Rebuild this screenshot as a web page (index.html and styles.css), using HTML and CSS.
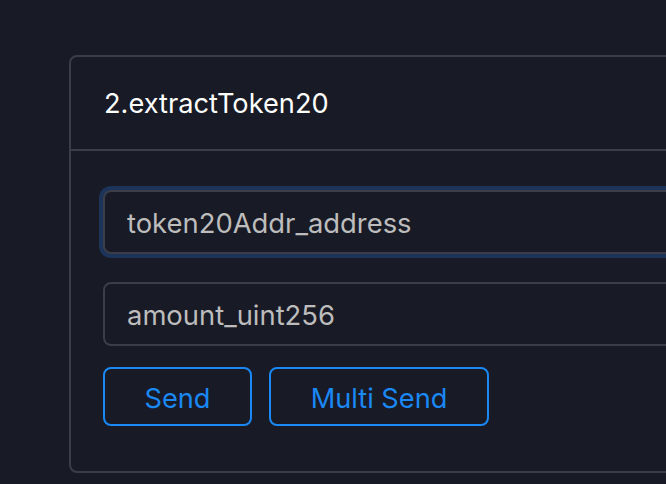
FILE: index.html
```html
<!DOCTYPE html>
<html>
<head>
<meta charset="utf-8">
<link rel="stylesheet" href="styles.css">
</head>
<body>
<div class="page">
  <div class="card">
    <div class="card-header">2.extractToken20</div>
    <div class="card-body">
      <input class="field field-focus" type="text" placeholder="token20Addr_address">
      <input class="field" type="text" placeholder="amount_uint256">
      <div class="actions">
        <button class="btn btn-send">Send</button>
        <button class="btn btn-multi">Multi Send</button>
      </div>
    </div>
  </div>
</div>
</body>
</html>
```
FILE: styles.css
```css
html, body {
  margin: 0;
  background: #181a25;
  overflow: hidden;
  font-family: Inter, "Noto Sans", sans-serif;
}
.page {
  padding: 55px 0 0 69px;
  width: 597px;
  overflow: hidden;
}
.card {
  width: 900px;
  border: 2px solid #3b3d49;
  border-radius: 8px;
}
.card-header {
  height: 92px;
  padding: 0 33px;
  display: flex;
  align-items: center;
  border-bottom: 2px solid #3b3d49;
  color: #ffffff;
  font-size: 27.2px;
}
.card-body {
  padding: 39px 32px 45px;
  display: flex;
  flex-direction: column;
}
.field {
  box-sizing: border-box;
  height: 64px;
  width: 800px;
  border: 2px solid #3b3d49;
  border-radius: 8px;
  background: #181a25;
  padding: 2px 22px 0;
  font-family: Inter, "Noto Sans", sans-serif;
  font-size: 27.4px;
  color: #bdbdbd;
  outline: none;
  margin: 0;
}
.field::placeholder {
  color: #bdbdbd;
}
.field + .field {
  margin-top: 28px;
}
.field-focus {
  box-shadow: 0 0 0 4px #1c3459;
}
.actions {
  display: flex;
  gap: 17px;
  margin-top: 21px;
}
.btn {
  box-sizing: border-box;
  height: 59px;
  border: 2px solid #1a88f5;
  border-radius: 8px;
  background: transparent;
  color: #1a88f5;
  font-family: Inter, "Noto Sans", sans-serif;
  font-size: 27.2px;
  padding: 3px 0 0;
}
.btn-send { width: 149px; }
.btn-multi { width: 220px; }
```
